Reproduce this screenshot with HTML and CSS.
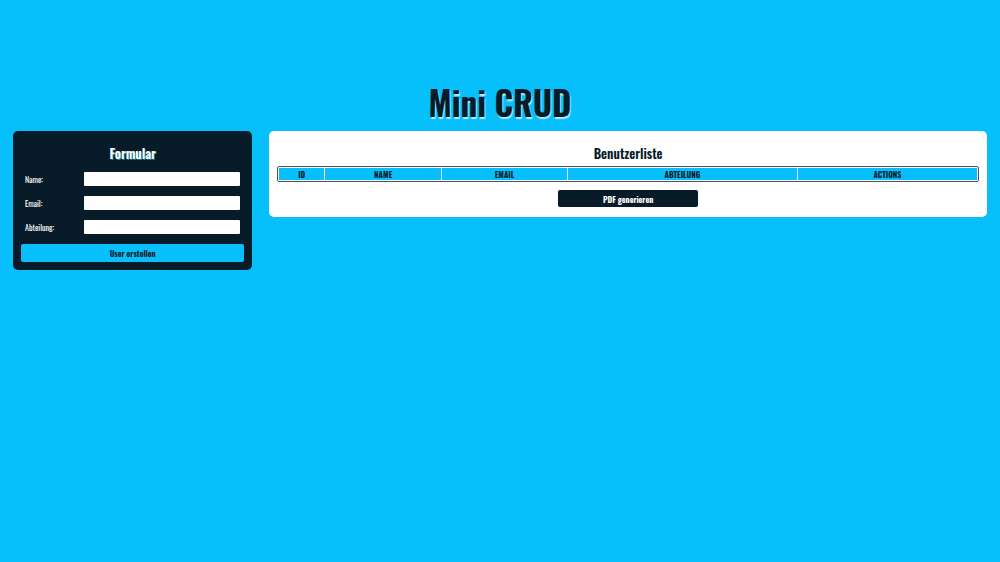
FILE: index.html
```html
<!DOCTYPE html>
<html lang="de">
<head>
<meta charset="utf-8">
<meta name="viewport" content="width=device-width, initial-scale=1">
<title>Mini CRUD</title>
<link rel="stylesheet" href="styles.css">
</head>
<body>
<h1 class="page-title">Mini CRUD</h1>
<main class="layout">
  <section class="panel panel-dark">
    <h2 class="panel-title panel-title-light">Formular</h2>
    <form class="user-form">
      <div class="field"><label for="name">Name:</label><input id="name" type="text"></div>
      <div class="field"><label for="email">Email:</label><input id="email" type="email"></div>
      <div class="field"><label for="department">Abteilung:</label><input id="department" type="text"></div>
      <button class="button button-create" type="button">User erstellen</button>
    </form>
  </section>
  <section class="panel panel-light">
    <h2 class="panel-title">Benutzerliste</h2>
    <table class="user-table">
      <colgroup>
        <col class="col-id"><col class="col-name"><col class="col-email"><col class="col-department"><col>
      </colgroup>
      <thead>
        <tr><th scope="col">ID</th><th scope="col">NAME</th><th scope="col">EMAIL</th><th scope="col">ABTEILUNG</th><th scope="col">ACTIONS</th></tr>
      </thead>
    </table>
    <button class="button button-pdf" type="button">PDF generieren</button>
  </section>
</main>
</body>
</html>
```
FILE: styles.css
```css
* {
  box-sizing: border-box;
}

body {
  margin: 0;
  padding: 75px 13px 13px;
  min-height: 100vh;
  background: #07c0fb;
  color: #081b29;
  font-family: Oswald, "Roboto Condensed", "Open Sans Condensed", "Liberation Sans Narrow", "Liberation Sans", sans-serif;
  font-size: 8px;
  line-height: 14px;
}

.page-title {
  margin: 0;
  font-size: 33px;
  line-height: 56px;
  font-weight: 700;
  text-align: center;
  text-shadow: 1px 2px 1px #b5eafb;
}

.layout {
  display: grid;
  grid-template-columns: 1fr 3fr;
  gap: 17px;
  align-items: start;
}

.panel {
  padding: 12px 8px 8px;
  border-radius: 5px;
}

.panel-dark {
  background: #081b29;
  color: #fff;
}

.panel-light {
  padding: 12px 8px 10px;
  background: #fff;
}

.panel-title {
  margin: 0 0 3px;
  font-size: 13px;
  line-height: 20px;
  font-weight: 600;
  text-align: center;
}

.panel-title-light {
  margin-bottom: 9px;
  text-shadow: 1px 1px 0 #1b7f91;
}

.user-form {
  display: flex;
  flex-direction: column;
  gap: 10px;
}

.field {
  display: flex;
  padding: 0 4px;
}

.field label {
  width: 59px;
}

.field input {
  flex: 1;
  min-width: 0;
  height: 14px;
  padding: 0 4px;
  border: 0;
  border-radius: 1px;
  background: #fff;
  font: inherit;
}

.button {
  display: block;
  border: 0;
  border-radius: 2px;
  padding: 0;
  font: inherit;
  font-weight: 700;
}

.button-create {
  height: 18px;
  background: #07c0fb;
  color: #081b29;
}

.button-pdf {
  width: 20%;
  height: 17px;
  margin: 8px auto 0;
  background: #081b29;
  color: #fff;
}

.user-table {
  width: 100%;
  table-layout: fixed;
  border: 1px solid #44566a;
  border-radius: 2px;
  border-collapse: separate;
  border-spacing: 1px;
}

.user-table th {
  height: 12px;
  padding: 0;
  background: #07c0fb;
  line-height: 12px;
  text-align: center;
}

.col-id {
  width: 45px;
}

.col-name {
  width: 16.7%;
}

.col-email {
  width: 18%;
}

.col-department {
  width: 33%;
}
```
